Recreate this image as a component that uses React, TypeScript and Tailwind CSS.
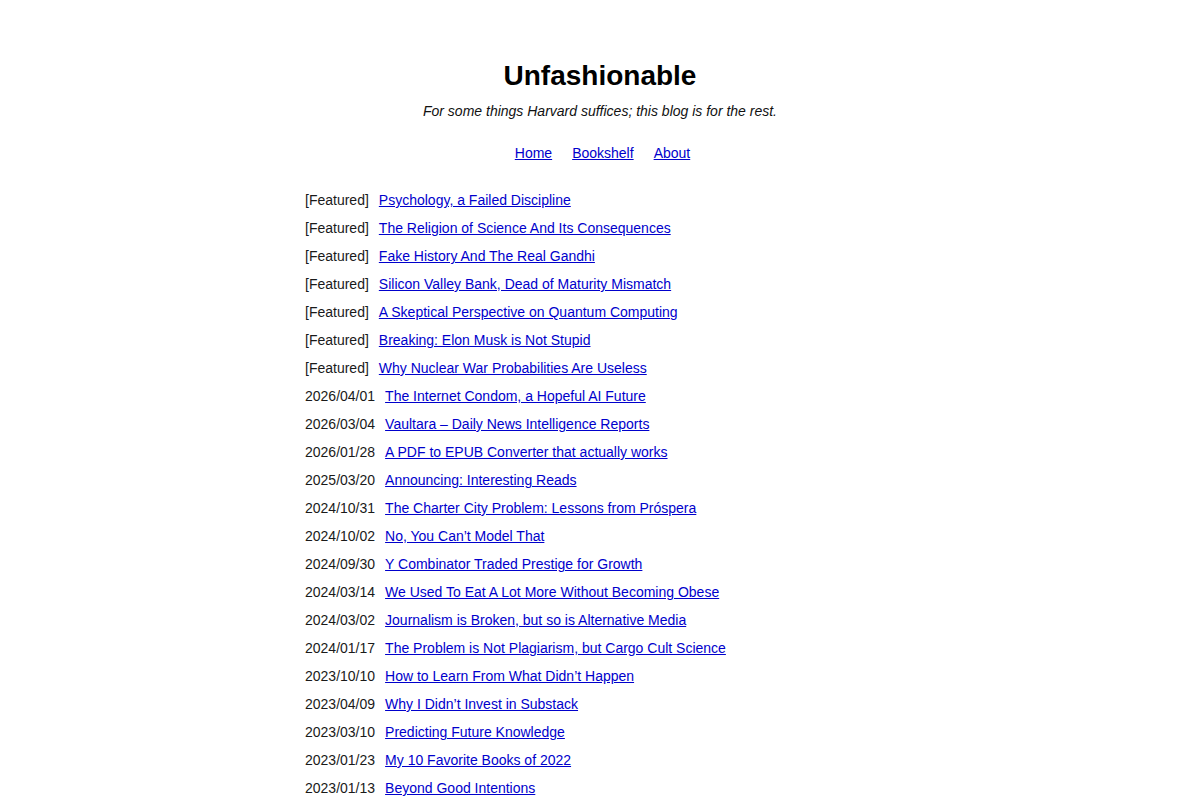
const FEATURED = [
  'Psychology, a Failed Discipline',
  'The Religion of Science And Its Consequences',
  'Fake History And The Real Gandhi',
  'Silicon Valley Bank, Dead of Maturity Mismatch',
  'A Skeptical Perspective on Quantum Computing',
  'Breaking: Elon Musk is Not Stupid',
  'Why Nuclear War Probabilities Are Useless',
]

const POSTS: [string, string][] = [
  ['2026/04/01', 'The Internet Condom, a Hopeful AI Future'],
  ['2026/03/04', 'Vaultara – Daily News Intelligence Reports'],
  ['2026/01/28', 'A PDF to EPUB Converter that actually works'],
  ['2025/03/20', 'Announcing: Interesting Reads'],
  ['2024/10/31', 'The Charter City Problem: Lessons from Próspera'],
  ['2024/10/02', 'No, You Can’t Model That'],
  ['2024/09/30', 'Y Combinator Traded Prestige for Growth'],
  ['2024/03/14', 'We Used To Eat A Lot More Without Becoming Obese'],
  ['2024/03/02', 'Journalism is Broken, but so is Alternative Media'],
  ['2024/01/17', 'The Problem is Not Plagiarism, but Cargo Cult Science'],
  ['2023/10/10', 'How to Learn From What Didn’t Happen'],
  ['2023/04/09', 'Why I Didn’t Invest in Substack'],
  ['2023/03/10', 'Predicting Future Knowledge'],
  ['2023/01/23', 'My 10 Favorite Books of 2022'],
  ['2023/01/13', 'Beyond Good Intentions'],
]

const link = 'text-[#0000cc] underline'

function Row({ label, title }: { label: string; title: string }) {
  return (
    <li className="flex leading-[28px]">
      <span className="mr-[10px] text-[#1a1a1a]">{label}</span>
      <a href="#" className={link}>{title}</a>
    </li>
  )
}

export default function App() {
  return (
    <div className="min-h-screen bg-white text-sm text-[#1a1a1a]" style={{ fontFamily: '"Liberation Sans", Arial, sans-serif' }}>
      <div className="mx-auto max-w-[590px] pt-[59px]">
        <header className="text-center">
          <h1 className="text-[28px] leading-[34px] font-bold text-black">Unfashionable</h1>
          <p className="mt-[8px] leading-[20px] italic text-[#111]">
            For some things Harvard suffices; this blog is for the rest.
          </p>
          <nav className="mt-[22px] flex justify-center gap-[20px] pl-[5px] leading-[20px]">
            <a href="#" className={link}>Home</a>
            <a href="#" className={link}>Bookshelf</a>
            <a href="#" className={link}>About</a>
          </nav>
        </header>

        <ul className="mt-[23px]">
          {FEATURED.map(t => <Row key={t} label="[Featured]" title={t} />)}
          {POSTS.map(([d, t]) => <Row key={t} label={d} title={t} />)}
        </ul>
      </div>
    </div>
  )
}
